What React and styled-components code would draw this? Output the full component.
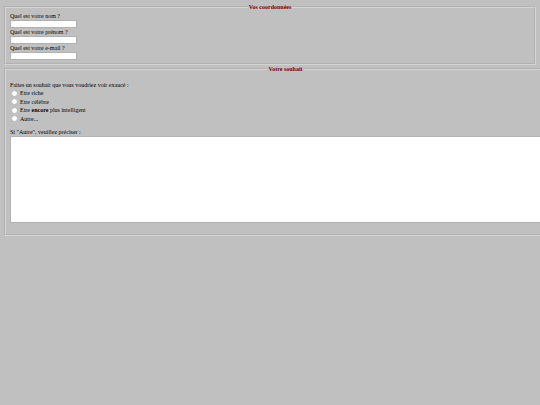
import React, { useState } from 'react'
import styled, { createGlobalStyle } from 'styled-components'

const GlobalStyle = createGlobalStyle`
  * {
    box-sizing: border-box;
  }
  body {
    margin: 0;
    padding: 3px 4px;
    overflow: hidden;
    background: #c0c0c0;
    color: #000;
    font: 6px/8px 'Liberation Serif', 'Times New Roman', serif;
  }
`

const Group = styled.fieldset`
  margin: 0;
  padding: ${({ $padding }) => $padding};
  border: 2px groove rgba(242, 242, 242, 0.4);
`

const Title = styled.legend`
  margin: 0 auto;
  padding: 0 1px;
  color: #800000;
  font-weight: bold;
  line-height: 8px;
`

const Label = styled.label`
  display: block;
`

const TextInput = styled.input`
  display: block;
  width: 67px;
  height: 8px;
  padding: 0 1px;
  border: 1px solid #b0b0b0;
  background: #fff;
  font: inherit;
`

const Choices = styled.div`
  display: flex;
  flex-direction: column;
  justify-content: space-between;
  height: 34px;
  margin-bottom: 5px;
`

const Choice = styled.label`
  display: flex;
  align-items: center;
  gap: 2px;
  padding-left: 1px;
`

const Radio = styled.input`
  appearance: none;
  width: 7px;
  height: 7px;
  margin: 0;
  border: 1px solid #b8b8b8;
  border-radius: 50%;
  background: #fff;

  &:checked {
    border: 2px solid #336;
  }
`

const TextArea = styled.textarea`
  display: block;
  height: 87px;
  padding: 1px;
  border: 1px solid #b2b2b2;
  background: #fff;
  font: 6px/7px 'Liberation Mono', monospace;
  resize: none;
`

const fields = [
  { id: 'nom', label: 'Quel est votre nom ?', type: 'text' },
  { id: 'prenom', label: 'Quel est votre prénom ?', type: 'text' },
  { id: 'email', label: 'Quel est votre e-mail ?', type: 'email' },
]

const wishes = [
  { id: 'riche', label: 'Etre riche' },
  { id: 'celebre', label: 'Etre célèbre' },
  { id: 'intelligent', label: <>Etre <strong>encore</strong> plus intelligent</> },
  { id: 'autre', label: 'Autre...' },
]

export default () => {
  const [wish, setWish] = useState('')

  return (
    <form>
      <GlobalStyle />
      <Group $padding="1px 4px 3px">
        <Title>Vos coordonnées</Title>
        {fields.map(f =>
          <div key={f.id}>
            <Label htmlFor={f.id}>{f.label}</Label>
            <TextInput id={f.id} name={f.id} type={f.type} />
          </div>
        )}
      </Group>
      <Group $padding="8px 4px 11px">
        <Title>Votre souhait</Title>
        <div id="question">Faites un souhait que vous voudriez voir exaucé :</div>
        <Choices role="radiogroup" aria-labelledby="question">
          {wishes.map(w =>
            <Choice key={w.id}>
              <Radio
                type="radio"
                name="souhait"
                value={w.id}
                checked={wish === w.id}
                onChange={() => setWish(w.id)}
              />
              <span>{w.label}</span>
            </Choice>
          )}
        </Choices>
        <Label htmlFor="precisions">Si "Autre", veuillez préciser :</Label>
        <TextArea id="precisions" name="precisions" cols={133} />
      </Group>
    </form>
  )
}
